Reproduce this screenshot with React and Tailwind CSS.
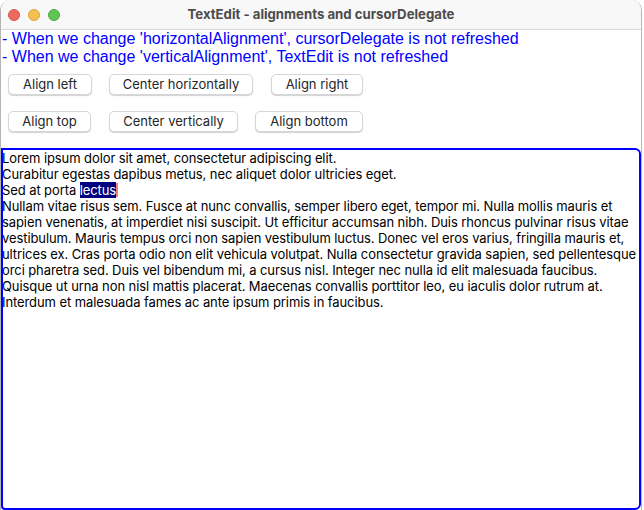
import React from 'react';

const BUTTON_ROWS = [
  [
    { label: 'Align left', cls: 'w-[84px]' },
    { label: 'Center horizontally', cls: 'w-[144px] ml-[17px]' },
    { label: 'Align right', cls: 'w-[92px] ml-[18px]' },
  ],
  [
    { label: 'Align top', cls: 'w-[83px]' },
    { label: 'Center vertically', cls: 'w-[129px] ml-[18px]' },
    { label: 'Align bottom', cls: 'w-[108px] ml-[17px]' },
  ],
];

// wrapped the way the editor wraps it
const PARAGRAPH = [
  'Nullam vitae risus sem. Fusce at nunc convallis, semper libero eget, tempor mi. Nulla mollis mauris et',
  'sapien venenatis, at imperdiet nisi suscipit. Ut efficitur accumsan nibh. Duis rhoncus pulvinar risus vitae',
  'vestibulum. Mauris tempus orci non sapien vestibulum luctus. Donec vel eros varius, fringilla mauris et,',
  'ultrices ex. Cras porta odio non elit vehicula volutpat. Nulla consectetur gravida sapien, sed pellentesque',
  'orci pharetra sed. Duis vel bibendum mi, a cursus nisl. Integer nec nulla id elit malesuada faucibus.',
  'Quisque ut urna non nisl mattis placerat. Maecenas convallis porttitor leo, eu iaculis dolor rutrum at.',
  'Interdum et malesuada fames ac ante ipsum primis in faucibus.',
];

function TrafficLights() {
  return (
    <div className="absolute left-[7px] top-[9px] flex gap-[8px]">
      <span className="w-[12px] h-[12px] rounded-full bg-[#ec6a5e] border border-[#d6574c]" />
      <span className="w-[12px] h-[12px] rounded-full bg-[#f4bf4f] border border-[#d9a53c]" />
      <span className="w-[12px] h-[12px] rounded-full bg-[#61c554] border border-[#4eaa43]" />
    </div>
  );
}

export default function App() {
  return (
    <div className="w-[644px] h-[510px] bg-white overflow-hidden relative">
      <div className="w-[642px] h-[510px] flex flex-col bg-white border-l border-r border-[#b5b5b5] rounded-t-[10px] overflow-hidden">
        {/* title bar */}
        <div className="relative h-[30px] shrink-0 bg-[#f8f8f8] border-b border-[#d8d8d8] flex items-center justify-center">
          <TrafficLights />
          <span className="text-[13.2px] font-bold text-[#4c4c4c]" style={{ fontFamily: 'Inter, "Liberation Sans", sans-serif' }}>
            TextEdit - alignments and cursorDelegate
          </span>
        </div>

        <div className="flex-1 flex flex-col">
          <div className="pl-[1px] text-[16px] leading-[18px] text-[#0000ff]" style={{ fontFamily: '"Liberation Sans", Arial, sans-serif' }}>
            <div>- When we change 'horizontalAlignment', cursorDelegate is not refreshed</div>
            <div>- When we change 'verticalAlignment', TextEdit is not refreshed</div>
          </div>

          <div className="flex flex-col gap-[16px] pl-[7px] pt-[8px]" style={{ fontFamily: 'Inter, "Noto Sans", sans-serif' }}>
            {BUTTON_ROWS.map((row, i) => (
              <div key={i} className="flex">
                {row.map((b) => (
                  <button key={b.label} className={`${b.cls} h-[21px] bg-white rounded-[5px] border border-[#d6d6d6] shadow-[0_1px_1px_rgba(0,0,0,0.18)] text-[13px] leading-none text-[#262626]`}>
                    {b.label}
                  </button>
                ))}
              </div>
            ))}
          </div>

          <div className="mt-[16px] flex-1 border-2 border-[#0000ff] rounded-tr-[6px] rounded-br-[6px] rounded-bl-[4px] overflow-hidden">
            <div className="-ml-[1px] text-[13px] leading-[16px] text-black tracking-[-0.09px] whitespace-nowrap" style={{ fontFamily: 'Inter, "Noto Sans", sans-serif' }}>
              <div>Lorem ipsum dolor sit amet, consectetur adipiscing elit.</div>
              <div>Curabitur egestas dapibus metus, nec aliquet dolor ultricies eget.</div>
              <div>
                Sed at porta <span className="bg-[#000080] text-white">lectus</span>
                <span className="inline-block w-[2px] h-[14px] align-[-2px] bg-[#f08080]" />
              </div>
              {PARAGRAPH.map((line) => (
                <div key={line}>{line}</div>
              ))}
            </div>
          </div>
        </div>
      </div>
    </div>
  );
}
